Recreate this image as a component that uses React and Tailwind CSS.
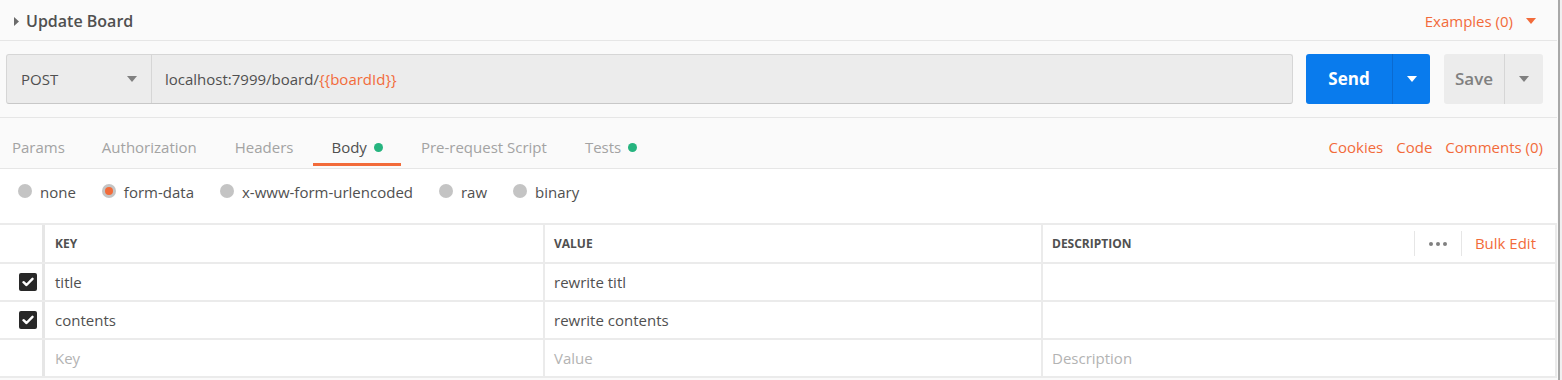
import React from "react";

const Caret = ({ color = "#808080", className = "" }) => (
  <svg width="10" height="6" viewBox="0 0 10 6" className={className}>
    <path d="M0 0 L10 0 L5 6 Z" fill={color} />
  </svg>
);

const Check = () => (
  <div className="w-[18px] h-[18px] rounded-[2px] bg-[#282828] flex items-center justify-center">
    <svg width="12" height="10" viewBox="0 0 12 10">
      <path d="M1.5 5.2 L4.5 8 L10.5 1.8" fill="none" stroke="#ffffff" strokeWidth="2.4" strokeLinecap="round" strokeLinejoin="round" />
    </svg>
  </div>
);

const Radio = ({ label, selected }) => (
  <div className="flex items-center gap-[8px]">
    <div className="w-[14px] h-[14px] -mt-[3px] rounded-full bg-[#c4c4c4] flex items-center justify-center">
      {selected && <div className="w-[8px] h-[8px] rounded-full bg-[#f26b3a]" />}
    </div>
    <span className="text-[15px] leading-[20px] text-[#505050]">{label}</span>
  </div>
);

const Tab = ({ label, active, dot, first }) => (
  <div className={`flex flex-col h-[50px] pt-[19px] ${first ? "pl-[12px] pr-[18px]" : "px-[19px]"}`}>
    <div className="flex items-center gap-[7px] h-[20px]">
      <span className={`text-[15px] leading-[20px] ${active ? "text-[#505050]" : "text-[#a3a3a3]"}`}>{label}</span>
      {dot && <span className="w-[9px] h-[9px] rounded-full bg-[#26b47f]" />}
    </div>
    <div className="h-[6px]" />
    <div className={`h-[3px] ${active ? "bg-[#f26b3a] -mx-[18px]" : ""}`} />
  </div>
);

const Row = ({ checked, k, v, d, placeholder }) => (
  <div className="flex h-[38px] border-b-2 border-[#ebebeb]">
    <div className="w-[42px] flex items-center justify-end pr-[5px]">{checked && <Check />}</div>
    <div className={`w-[501px] border-l-[3px] border-[#e6e6e6] pl-[10px] flex items-center text-[15px] ${placeholder ? "text-[#b3b3b3]" : "text-[#505050]"}`}>{k}</div>
    <div className={`w-[498px] border-l-2 border-[#ebebeb] pl-[9px] flex items-center text-[15px] ${placeholder ? "text-[#b3b3b3]" : "text-[#505050]"}`}>{v}</div>
    <div className={`flex-1 border-l-2 border-[#ebebeb] pl-[9px] flex items-center text-[15px] ${placeholder ? "text-[#b3b3b3]" : "text-[#505050]"}`}>{d}</div>
  </div>
);

export default function App() {
  return (
    <div className="flex w-[1562px] h-[380px] bg-[#fafafa] font-['Open_Sans',sans-serif] overflow-hidden">
      <div className="w-[1557px] flex flex-col">
        {/* Header */}
        <div className="h-[41px] border-b border-[#e6e6e6] flex items-center pt-[2px] pl-[14px] pr-[21px]">
          <svg width="5" height="9" viewBox="0 0 5 9" className="mr-[7px]">
            <path d="M0 0 L5 4.5 L0 9 Z" fill="#6b6b6b" />
          </svg>
          <span className="text-[16px] font-semibold text-[#505050] leading-[22px]">Update Board</span>
          <div className="ml-auto flex items-center gap-[13px]">
            <span className="text-[15px] text-[#f26b3a] leading-[20px]">Examples (0)</span>
            <Caret color="#f26b3a" />
          </div>
        </div>

        {/* URL row */}
        <div className="h-[77px] border-b border-[#e6e6e6] flex items-center pl-[6px] pr-[14px] gap-[13px]">
          <div className="flex-1 h-[50px] flex rounded-[3px] border border-[#d6d6d6] border-b-[#c8c8c8] bg-[#ececec] overflow-hidden">
            <div className="w-[145px] border-r border-[#d6d6d6] flex items-center pl-[14px] pr-[14px]">
              <span className="text-[15px] text-[#505050]">POST</span>
              <Caret className="ml-auto" />
            </div>
            <div className="flex-1 flex items-center pl-[13px] text-[15px] text-[#505050]">
              localhost:7999/board/<span className="text-[#f26b3a]">{"{{boardId}}"}</span>
            </div>
          </div>
          <div className="flex gap-[14px]">
            <div className="w-[124px] h-[50px] rounded-[3px] bg-[#097bed] flex">
              <div className="w-[87px] border-r border-[#0a6ad0] flex items-center justify-center text-[17px] font-bold text-white">Send</div>
              <div className="flex-1 flex items-center justify-center"><Caret color="#ffffff" /></div>
            </div>
            <div className="w-[99px] h-[50px] rounded-[3px] bg-[#ececec] flex">
              <div className="w-[61px] border-r border-[#d6d6d6] flex items-center justify-center text-[17px] font-semibold text-[#808080]">Save</div>
              <div className="flex-1 flex items-center justify-center"><Caret color="#808080" /></div>
            </div>
          </div>
        </div>

        {/* Tabs */}
        <div className="h-[51px] border-b border-[#e6e6e6] flex">
          <Tab label="Params" first />
          <Tab label="Authorization" />
          <Tab label="Headers" />
          <Tab label="Body" active dot />
          <Tab label="Pre-request Script" />
          <Tab label="Tests" dot />
          <div className="ml-auto flex pt-[19px] pr-[14px] gap-[13px]">
            <span className="text-[15px] leading-[20px] text-[#f26b3a]">Cookies</span>
            <span className="text-[15px] leading-[20px] text-[#f26b3a]">Code</span>
            <span className="text-[15px] leading-[20px] text-[#f26b3a]">Comments (0)</span>
          </div>
        </div>

        {/* Body area */}
        <div className="bg-white flex flex-col">
          <div className="h-[54px] pt-[13px] pl-[18px] flex items-start gap-[26px]">
            <Radio label="none" />
            <Radio label="form-data" selected />
            <Radio label="x-www-form-urlencoded" />
            <Radio label="raw" />
            <Radio label="binary" />
          </div>
          <div className="w-[1557px] border-t-2 border-r-2 border-[#ebebeb]">
            <div className="flex h-[39px] border-b-2 border-[#ebebeb]">
              <div className="w-[42px]" />
              <div className="w-[501px] border-l-[3px] border-[#e6e6e6] pl-[10px] flex items-center text-[12px] font-bold text-[#505050]">KEY</div>
              <div className="w-[498px] border-l-2 border-[#ebebeb] pl-[9px] flex items-center text-[12px] font-bold text-[#505050]">VALUE</div>
              <div className="flex-1 border-l-2 border-[#ebebeb] pl-[9px] flex items-center text-[12px] font-bold text-[#505050]">
                DESCRIPTION
                <div className="ml-auto flex items-center h-full pr-[19px]">
                  <div className="h-[25px] border-l border-[#e6e6e6]" />
                  <div className="flex gap-[3px] px-[14px]">
                    <span className="w-[4px] h-[4px] rounded-full bg-[#808080]" />
                    <span className="w-[4px] h-[4px] rounded-full bg-[#808080]" />
                    <span className="w-[4px] h-[4px] rounded-full bg-[#808080]" />
                  </div>
                  <div className="h-[25px] border-l border-[#e6e6e6]" />
                  <span className="pl-[13px] text-[15px] font-normal text-[#f26b3a]">Bulk Edit</span>
                </div>
              </div>
            </div>
            <Row checked k="title" v="rewrite titl" d="" />
            <Row checked k="contents" v="rewrite contents" d="" />
            <Row k="Key" v="Value" d="Description" placeholder />
          </div>
        </div>
      </div>
      <div className="w-[1px] bg-[#fafafa]" />
      <div className="w-[2px] bg-[#a8a8a8]" />
      <div className="flex-1 bg-[#f0f0f0]" />
    </div>
  );
}
